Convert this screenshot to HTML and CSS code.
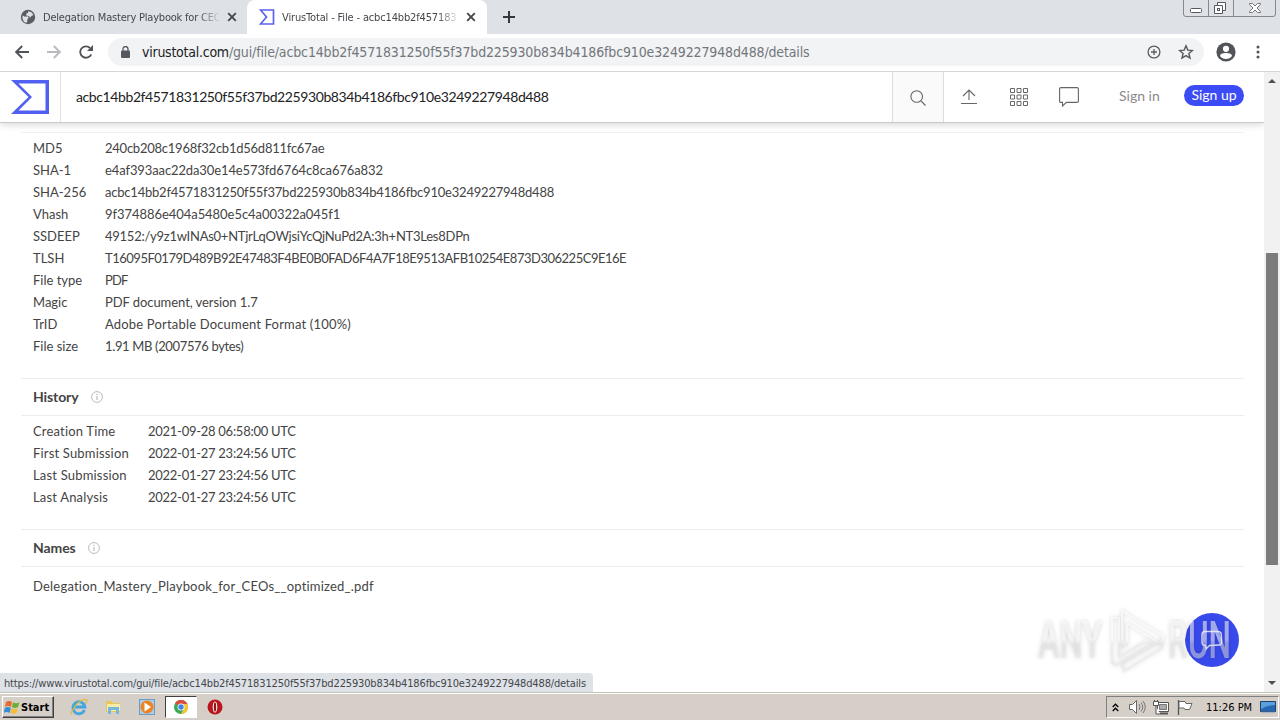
FILE: index.html
```html
<!DOCTYPE html>
<html lang="en">
<head>
  <meta charset="UTF-8" />
  <meta name="viewport" content="width=device-width, initial-scale=1.0" />
  <title>VirusTotal - File</title>
  <link rel="stylesheet" href="styles.css">
</head>
<body>
  <div class="tabs">
    <div class="tab">
      <svg class="favicon" width="16" height="16" viewBox="0 0 16 16"><circle cx="8" cy="8" r="7.2" fill="#5a5d62"/><path d="M2.5 6.500l2.500 1.200 2.700-.4 1 1.600-1.500 1.600.1 2.600-1.200.7C3.500 13 2 10.500 2.500 6.500zM8 2.200l3.500 1 2 2.800-2.200 1-.8 1.500-2-1.500-2.300-.6.2-1.800 1.600-.6z" fill="#dee1e6"/></svg>
      <span class="tab-title title-one">Delegation Mastery Playbook for CEO</span>
      <svg class="tab-close" width="10" height="10" viewBox="0 0 10 10"><path d="M1.200 1.200l7.600 7.600M8.800 1.200L1.200 8.800" stroke="#45484c" stroke-width="1.900"/></svg>
    </div>
    <div class="tab active">
      <svg class="favicon" width="16" height="16" viewBox="0 0 16 16"><path d="M1.500 1h13v14h-13L7.500 8z" fill="#fff" stroke="#5a63ee" stroke-width="1.700"/></svg>
      <span class="tab-title title-two">VirusTotal - File - acbc14bb2f457183</span>
      <svg class="tab-close" width="10" height="10" viewBox="0 0 10 10"><path d="M1.200 1.200l7.600 7.600M8.800 1.200L1.200 8.800" stroke="#45484c" stroke-width="1.900"/></svg>
    </div>
    <svg class="new-tab" width="12" height="12" viewBox="0 0 12 12"><path d="M6 0v12M0 6h12" stroke="#35383c" stroke-width="2"/></svg>
    <svg class="window-buttons" width="94" height="18" viewBox="0 0 94 18"><path d="M.5 0v14q0 2.500 2.500 2.500h87q2.500 0 2.500-2.500V0M25.500 0v16M50.500 0v16" fill="none" stroke="#85888e"/><rect x="7.500" y="8.500" width="11" height="4" rx="1" fill="#fff" stroke="#55585e"/><path d="M34.500 2.500h8v8h-8z" fill="#fff" stroke="#55585e"/><path d="M31.500 5.500h8v8h-8z" fill="#fff" stroke="#55585e"/><rect x="34.500" y="8.500" width="2" height="2" fill="none" stroke="#55585e"/><path d="M66.500 3.500h3l2.500 2.500 2.500-2.500h3v1l-3.500 3.500 3.500 3.500v1h-3L72 10l-2.500 2.500h-3v-1L70 8l-3.500-3.500z" fill="#fff" stroke="#64676c" stroke-width=".9"/></svg>
  </div>

  <div class="toolbar">
    <svg width="14" height="14" viewBox="0 0 14 14"><path d="M14 7H1.500M7.200 1L1.200 7l6 6" fill="none" stroke="#505357" stroke-width="1.900"/></svg>
    <svg class="forward" width="14" height="14" viewBox="0 0 14 14"><path d="M0 7h12.500M6.800 1l6 6-6 6" fill="none" stroke="#b9bbbe" stroke-width="1.900"/></svg>
    <svg class="reload" width="14" height="14" viewBox="0 0 14 14"><path d="M12.200 9.300A5.700 5.700 0 1 1 11 3" fill="none" stroke="#505357" stroke-width="1.900"/><path d="M14 0v6H8z" fill="#505357"/></svg>
    <div class="omnibox">
      <svg width="9" height="12" viewBox="0 0 9 12"><rect y="4.500" width="9" height="7.500" rx="1" fill="#55585d"/><path d="M2 5V3a2.500 2.500 0 0 1 5 0v2" fill="none" stroke="#55585d" stroke-width="1.300"/></svg>
      <span class="url"><span class="host">virustotal.com</span><span class="path">/gui/file/acbc14bb2f4571831250f55f37bd225930b834b4186fbc910e3249227948d488/details</span></span>
      <svg width="14" height="14" viewBox="0 0 14 14"><circle cx="7" cy="7" r="5.900" fill="none" stroke="#5a5d62" stroke-width="1.300"/><path d="M7 4v6M4 7h6" stroke="#5a5d62" stroke-width="1.300"/></svg>
      <svg class="star" width="16" height="16" viewBox="0 0 16 16"><path d="M8 1.800l1.800 4.300 4.600.4-3.500 3 1.100 4.500L8 11.600 4 14l1.100-4.500-3.500-3 4.600-.4z" fill="none" stroke="#55585d" stroke-width="1.400"/></svg>
    </div>
    <svg class="avatar" width="20" height="20" viewBox="0 0 20 20"><circle cx="10" cy="10" r="9.600" fill="#515458"/><circle cx="10" cy="6.800" r="3.100" fill="#fff"/><path d="M4 14q0-3 6-3t6 3q-2.200 3-6 3t-6-3z" fill="#fff"/></svg>
    <svg class="menu" width="4" height="14" viewBox="0 0 4 14"><circle cx="2" cy="2" r="1.500" fill="#505357"/><circle cx="2" cy="7" r="1.500" fill="#505357"/><circle cx="2" cy="12" r="1.500" fill="#505357"/></svg>
  </div>

  <div class="viewport">
    <div class="page">
      <div class="header">
        <div class="logo"><svg width="38" height="34" viewBox="0 0 38 34"><path d="M0 0h38v34H0l17.500-17zM7.500 3.500L21 17 7.500 30.500h27v-27z" fill="#5160f0" fill-rule="evenodd"/></svg></div>
        <div class="search-text"><span>acbc14bb2f4571831250f55f37bd225930b834b4186fbc910e3249227948d488</span></div>
        <div class="search-button"><svg width="16" height="16" viewBox="0 0 16 16"><circle cx="6.700" cy="6.500" r="5.800" fill="none" stroke="#666" stroke-width="1.100"/><path d="M11 10.800l4.500 4.700" stroke="#666" stroke-width="1.200"/></svg></div>
        <div class="actions">
          <svg class="upload" width="16" height="16" viewBox="0 0 16 16"><path d="M8 11V1M2 7l6-6 6 6M0 14.500h16" fill="none" stroke="#666" stroke-width="1.100"/></svg>
          <svg class="apps" width="20" height="20" viewBox="0 0 20 20"><path d="M1.500 1.500h4v4h-4zM8 1.500h4v4H8zM14.500 1.500h4v4h-4zM1.500 8h4v4h-4zM8 8h4v4H8zM14.500 8h4v4h-4zM1.500 14.500h4v4h-4zM8 14.500h4v4H8zM14.500 14.500h4v4h-4z" fill="none" stroke="#686868"/></svg>
          <svg class="comment" width="20" height="20" viewBox="0 0 20 20"><path d="M2 .6h16q1.400 0 1.400 1.400v12q0 1.400-1.400 1.400H7.500L3.500 19v-3.600H2Q.6 15.400.6 14V2Q.6.600 2 .6z" fill="none" stroke="#666" stroke-width="1.100"/></svg>
          <span class="sign-in">Sign in</span>
          <span class="sign-up">Sign up</span>
        </div>
      </div>

      <div class="content">
        <div class="section basic">
          <div class="row"><span class="key">MD5</span><span class="md5">240cb208c1968f32cb1d56d811fc67ae</span></div>
          <div class="row"><span class="key">SHA-1</span><span class="sha1">e4af393aac22da30e14e573fd6764c8ca676a832</span></div>
          <div class="row"><span class="key">SHA-256</span><span class="sha256">acbc14bb2f4571831250f55f37bd225930b834b4186fbc910e3249227948d488</span></div>
          <div class="row"><span class="key">Vhash</span><span class="vhash">9f374886e404a5480e5c4a00322a045f1</span></div>
          <div class="row"><span class="key">SSDEEP</span><span class="ssdeep">49152:/y9z1wINAs0+NTjrLqOWjsiYcQjNuPd2A:3h+NT3Les8DPn</span></div>
          <div class="row"><span class="key">TLSH</span><span class="tlsh">T16095F0179D489B92E47483F4BE0B0FAD6F4A7F18E9513AFB10254E873D306225C9E16E</span></div>
          <div class="row"><span class="key">File type</span><span class="type">PDF</span></div>
          <div class="row"><span class="key">Magic</span><span class="magic">PDF document, version 1.7</span></div>
          <div class="row"><span class="key">TrID</span><span class="trid">Adobe Portable Document Format (100%)</span></div>
          <div class="row"><span class="key">File size</span><span class="size">1.91 MB (2007576 bytes)</span></div>
        </div>

        <div class="heading"><span>History</span><svg width="12" height="12" viewBox="0 0 12 12"><circle cx="6" cy="6" r="5.400" fill="none" stroke="#bbb"/><path d="M6 5v4M6 2.800v1.300" stroke="#bbb" stroke-width="1.200"/></svg></div>
        <div class="section history">
          <div class="row"><span class="key">Creation Time</span><span class="date">2021-09-28 06:58:00 UTC</span></div>
          <div class="row"><span class="key">First Submission</span><span class="date">2022-01-27 23:24:56 UTC</span></div>
          <div class="row"><span class="key">Last Submission</span><span class="date">2022-01-27 23:24:56 UTC</span></div>
          <div class="row"><span class="key">Last Analysis</span><span class="date">2022-01-27 23:24:56 UTC</span></div>
        </div>

        <div class="heading"><span>Names</span><svg width="12" height="12" viewBox="0 0 12 12"><circle cx="6" cy="6" r="5.400" fill="none" stroke="#bbb"/><path d="M6 5v4M6 2.800v1.300" stroke="#bbb" stroke-width="1.200"/></svg></div>
        <div class="section names">
          <div class="row"><span class="filename">Delegation_Mastery_Playbook_for_CEOs__optimized_.pdf</span></div>
        </div>
      </div>
    </div>

    <div class="scrollbar">
      <svg width="8" height="4" viewBox="0 0 8 4"><path d="M4 0l4 4H0z" fill="#505050"/></svg>
      <div class="thumb"></div>
      <svg width="8" height="4" viewBox="0 0 8 4"><path d="M0 0h8L4 4z" fill="#505050"/></svg>
    </div>

    <div class="chat"><svg width="24" height="22" viewBox="0 0 24 22"><path d="M5 2.500h13q3 0 3.300 3l.4 7q0 3.500-3 3.500l-9.200.5L6 20l-.5-3.500Q2 16.500 2 13.500v-8q0-3 3-3z" fill="none" stroke="#dfe2ff" stroke-width="1.400"/></svg></div>
    <div class="status"><span>https://www.virustotal.com/gui/file/acbc14bb2f4571831250f55f37bd225930b834b4186fbc910e3249227948d488/details</span></div>
    <svg class="watermark" width="204" height="70" viewBox="0 0 204 70">
      <defs>
        <linearGradient id="fade" gradientUnits="userSpaceOnUse" x1="0" y1="0" x2="0" y2="70"><stop offset=".48" stop-color="#fff" stop-opacity=".55"/><stop offset=".54" stop-color="#e6e6e6" stop-opacity=".5"/></linearGradient>
      </defs>
      <text x="5" y="52" textLength="64" lengthAdjust="spacingAndGlyphs">ANY</text>
      <text x="135" y="52" textLength="63" lengthAdjust="spacingAndGlyphs">RUN</text>
      <path d="M79 12v45l4 2 37-22-5-3-29 17V12z"/>
      <path d="M89 42V5l41 25v6l-3 2-33-21v22z"/>
      <path d="M89 58l40-23v7L91 65z"/>
    </svg>
  </div>

  <div class="taskbar">
    <div class="start">
      <svg width="16" height="16" viewBox="0 0 16 16"><path d="M2 3q3-2 6 0L7 8Q4 6 1 8z" fill="#e66a31"/><path d="M9 3.300q3 1.700 6.500 0L14 8q-3 1.700-6 .3z" fill="#6cad38"/><path d="M.8 9q3-2 6 0l-1 5q-3-2-6 0z" fill="#378cd2"/><path d="M7.700 9.300q3 1.700 6.300 0l-1.200 4.500q-3 1.700-6 .3z" fill="#f4bd32"/></svg>
      <span>Start</span>
    </div>
    <div class="task"><svg width="18" height="18" viewBox="0 0 18 18"><path d="M14.500 12a6 6 0 1 1 .4-3H5" fill="none" stroke="#43a6df" stroke-width="2.800"/><path d="M2 15Q-1 18 4 10 10 1 16 1.500q2 .8-.5 4" fill="none" stroke="#e3b83d" stroke-width="1.300"/></svg></div>
    <div class="task"><svg width="18" height="18" viewBox="0 0 18 18"><path d="M2 3h6l1 2h7v9H2z" fill="#e7c65b"/><path d="M3 6h13v7H3z" fill="#f8eba6"/><path d="M4 16V9h11v7h-3v-4H7v4z" fill="#75b8df"/></svg></div>
    <div class="task"><svg width="18" height="18" viewBox="0 0 18 18"><rect x="1.500" y="1.500" width="15" height="15" fill="#a9cdea" stroke="#6c9bc5"/><circle cx="9" cy="9" r="6.500" fill="#ed8321"/><path d="M6.500 4.500l6.500 4.500-6.500 4.500z" fill="#fff"/></svg></div>
    <div class="task selected"><svg width="16" height="16" viewBox="0 0 16 16"><circle cx="8" cy="8" r="7" fill="#3ba757"/><path d="M8 8L2 4.300A7 7 0 0 1 14.300 5H8z" fill="#db4b3d"/><path d="M14.400 5A7 7 0 0 1 8 15l3.200-6L10 5z" fill="#f4c635"/><circle cx="8" cy="8" r="3.500" fill="#fff"/><circle cx="8" cy="8" r="2.700" fill="#4285e8"/></svg></div>
    <div class="task"><svg width="18" height="18" viewBox="0 0 18 18"><circle cx="9" cy="9" r="7.500" fill="#b9161d"/><ellipse cx="9" cy="9" rx="2.300" ry="5.500" fill="#fff"/><ellipse cx="9" cy="9" rx="1.200" ry="4.800" fill="#98121a"/></svg></div>
    <div class="tray">
      <svg width="7" height="9" viewBox="0 0 7 9"><path d="M.7 4l2.800-2.800L6.300 4M.7 8l2.800-2.800L6.300 8" fill="none" stroke="#000" stroke-width="1.300"/></svg>
      <svg class="speaker" width="17" height="14" viewBox="0 0 17 14"><path d="M.5 4.500h3l4-4v13l-4-4h-3z" fill="#fff" stroke="#666"/><path d="M10 4q2 3 0 6M12 2.500q3.500 4.500 0 9M14 1q4.500 6 0 12" fill="none" stroke="#777"/></svg>
      <svg class="network" width="17" height="15" viewBox="0 0 17 15"><path d="M4.500 2.500h11v9h-11z" fill="#fff" stroke="#555"/><path d="M6.500 4.500h7v5h-7z" fill="#aaa" stroke="#777"/><path d="M7 13.500h8" stroke="#555" stroke-width="2"/><path d="M.5 1.500h5v4h-5zM3 6v8h4M1.500 0v2M4.500 0v2" fill="#fff" stroke="#555"/></svg>
      <svg class="flag" width="16" height="15" viewBox="0 0 16 15"><path d="M1.500 0v15" stroke="#555" stroke-width="1.300"/><path d="M2 1.500h6l1 2h6l-2.500 6H8L7 8H2z" fill="#fff" stroke="#666"/></svg>
      <span class="clock">11:26 PM</span>
      <svg class="desktop" width="16" height="13" viewBox="0 0 16 13"><path d="M.5.500h15v10H.5z" fill="#2766b0" stroke="#1b4272"/><path d="M1 1h14v3Q7 4 1 8z" fill="#5aa0dd"/><path d="M1 11.500h14" stroke="#a9b5c2" stroke-width="1.500"/></svg>
    </div>
  </div>
</body>
</html>
```
FILE: styles.css
```css
* {
  box-sizing: border-box;
}
body {
  margin: 0;
  width: 1280px;
  height: 720px;
  overflow: hidden;
  display: flex;
  flex-direction: column;
  background: #fff;
  font-family: Lato, "Liberation Sans", sans-serif;
  font-size: 13px;
  color: #444;
}
svg {
  display: block;
  flex: none;
}
span {
  white-space: nowrap;
}

/* browser frame */
.tabs {
  display: flex;
  flex: none;
  height: 34px;
  background: #dee1e6;
  font-family: "DejaVu Sans Condensed", "DejaVu Sans", sans-serif;
  font-size: 11px;
  color: #44474b;
}
.tab {
  display: flex;
  align-items: center;
  width: 247px;
  height: 34px;
  padding-left: 20px;
}
.tab.active {
  width: 240px;
  padding-left: 12px;
  background: #fff;
  border-radius: 8px 8px 0 0;
}
.tab-title {
  width: 176px;
  margin-left: 7px;
  overflow: hidden;
  -webkit-mask-image: linear-gradient(90deg, #000 155px, transparent 178px);
  mask-image: linear-gradient(90deg, #000 155px, transparent 178px);
}
.title-one {
  letter-spacing: -0.2px;
}
.title-two {
  letter-spacing: -0.15px;
}
.tab-close {
  margin-left: 8px;
}
.new-tab {
  margin: 11px 0 0 16px;
}
.window-buttons {
  margin-left: auto;
  margin-right: 3px;
}
.toolbar {
  display: flex;
  align-items: center;
  flex: none;
  height: 38px;
  padding: 0 20px 2px 15px;
  border-bottom: 1px solid #d5d6d8;
}
.forward {
  margin-left: 18px;
}
.reload {
  margin-left: 18px;
}
.omnibox {
  display: flex;
  align-items: center;
  width: 1096px;
  height: 28px;
  margin-left: 15px;
  padding: 0 10px 0 13px;
  border-radius: 14px;
  background: #f1f3f4;
}
.url {
  flex: 1;
  margin-left: 12px;
  font-family: "DejaVu Sans Condensed", "DejaVu Sans", sans-serif;
  font-size: 14px;
  letter-spacing: -0.14px;
  color: #73767b;
}
.host {
  letter-spacing: -0.25px;
  color: #202124;
}
.star {
  margin-left: 17px;
}
.avatar {
  margin-left: 12px;
}
.menu {
  margin-left: auto;
}

/* page */
.viewport {
  position: relative;
  display: flex;
  flex: none;
  height: 620px;
}
.page {
  width: 1264px;
  overflow: hidden;
}
.header {
  display: flex;
  height: 51px;
  border-bottom: 1px solid #c9c9c9;
  box-shadow: 0 2px 7px rgba(0, 0, 0, 0.15);
}
.logo {
  display: flex;
  align-items: center;
  width: 61px;
  padding-left: 11px;
  border-right: 1px solid #e2e2e2;
}
.search-text {
  display: flex;
  align-items: center;
  width: 831px;
  padding: 0 0 1px 15px;
  font-size: 14px;
  letter-spacing: -0.4px;
  color: #222;
}
.search-button {
  display: flex;
  align-items: center;
  justify-content: center;
  width: 52px;
  padding-top: 1px;
  background: #fafafa;
  border: solid #ddd;
  border-width: 0 1px;
}
.actions {
  display: flex;
  align-items: center;
  padding: 0 0 3px 17px;
  font-size: 14px;
}
.upload {
  margin-top: 2px;
}
.apps {
  margin: 2px 0 0 32px;
}
.comment {
  margin: 2px 0 0 30px;
}
.sign-in {
  width: 42px;
  margin-left: 40px;
  color: #8a8a8a;
}
.sign-up {
  width: 60px;
  height: 21px;
  margin-left: 23px;
  border-radius: 11px;
  background: #3b4bf5;
  color: #fff;
  line-height: 20px;
  text-align: center;
}
.content {
  padding: 9px 20px 0 21px;
}
.section {
  padding: 5px 12px 20px;
}
.basic {
  border-top: 1px solid #f0f0f0;
}
.row {
  display: flex;
  height: 22px;
  line-height: 21px;
}
.key {
  width: 72px;
}
.history .key {
  width: 115px;
  letter-spacing: 0.18px;
}
.md5 {
  letter-spacing: -0.24px;
}
.sha1 {
  letter-spacing: -0.11px;
}
.sha256 {
  letter-spacing: -0.21px;
}
.vhash {
  letter-spacing: -0.05px;
}
.ssdeep {
  letter-spacing: -0.25px;
}
.tlsh {
  letter-spacing: -0.49px;
}
.type {
  letter-spacing: -0.8px;
}
.magic {
  letter-spacing: -0.07px;
}
.trid {
  letter-spacing: 0.18px;
}
.size {
  letter-spacing: -0.35px;
}
.date {
  letter-spacing: -0.27px;
}
.filename {
  letter-spacing: 0.21px;
}
.heading {
  display: flex;
  align-items: center;
  gap: 12px;
  height: 38px;
  padding-left: 12px;
  border: solid #ececec;
  border-width: 1px 0;
  font-size: 14px;
  font-weight: bold;
}
.heading span {
  padding-bottom: 2px;
  letter-spacing: -0.1px;
}
.names {
  padding-top: 9px;
}
.scrollbar {
  display: flex;
  flex-direction: column;
  align-items: center;
  width: 16px;
  padding: 7px 0;
  background: #f1f1f1;
}
.thumb {
  width: 12px;
  height: 312px;
  margin: 170px 0 auto;
  background: #7b7b7b;
}

/* things floating above the page */
.chat {
  position: absolute;
  left: 1185px;
  top: 541px;
  display: flex;
  align-items: center;
  justify-content: center;
  width: 54px;
  height: 54px;
  border-radius: 50%;
  background: #394aec;
}
.status {
  position: absolute;
  left: 0;
  bottom: 0;
  width: 593px;
  height: 19px;
  padding-left: 4px;
  border-radius: 0 4px 0 0;
  background: #dee1e6;
  color: #44474b;
  font-family: "DejaVu Sans Condensed", "DejaVu Sans", sans-serif;
  font-size: 11px;
  letter-spacing: -0.15px;
  line-height: 21px;
}
.watermark {
  position: absolute;
  left: 1033px;
  top: 534px;
  overflow: visible;
  filter: drop-shadow(0 0 2px rgba(0, 0, 0, 0.3));
}
.watermark text {
  font-family: Roboto, sans-serif;
  font-size: 51px;
  font-weight: 500;
  fill: url(#fade);
}
.watermark path {
  fill: none;
  stroke: url(#fade);
  stroke-width: 2;
}

/* taskbar */
.taskbar {
  display: flex;
  align-items: center;
  flex: none;
  height: 28px;
  padding: 1px 1px 0 2px;
  background: #d6cfc8;
  border-top: 1px solid #c5c4bb;
  box-shadow: inset 0 1px #fff;
  color: #000;
  font-family: "DejaVu Sans Condensed", "DejaVu Sans", sans-serif;
  font-size: 11px;
}
.start {
  display: flex;
  align-items: center;
  gap: 1px;
  width: 52px;
  height: 22px;
  margin-right: 9px;
  padding-left: 1px;
  border: 1px solid;
  border-color: #fff #404040 #404040 #fff;
  box-shadow: inset -1px -1px #808080;
  font-weight: bold;
}
.task {
  display: flex;
  align-items: center;
  justify-content: center;
  width: 32px;
  height: 22px;
  margin-right: 2px;
}
.selected {
  background: #fff;
  border: 1px solid;
  border-color: #404040 #fff #fff #404040;
}
.tray {
  display: flex;
  align-items: center;
  width: 173px;
  height: 22px;
  margin-left: auto;
  padding-left: 5px;
  border: 1px solid;
  border-color: #808080 #fff #fff #808080;
}
.speaker {
  margin-left: 10px;
}
.network {
  margin-left: 7px;
}
.flag {
  margin-left: 7px;
}
.clock {
  width: 46px;
  margin-left: 13px;
}
.desktop {
  margin-left: 8px;
}
```
